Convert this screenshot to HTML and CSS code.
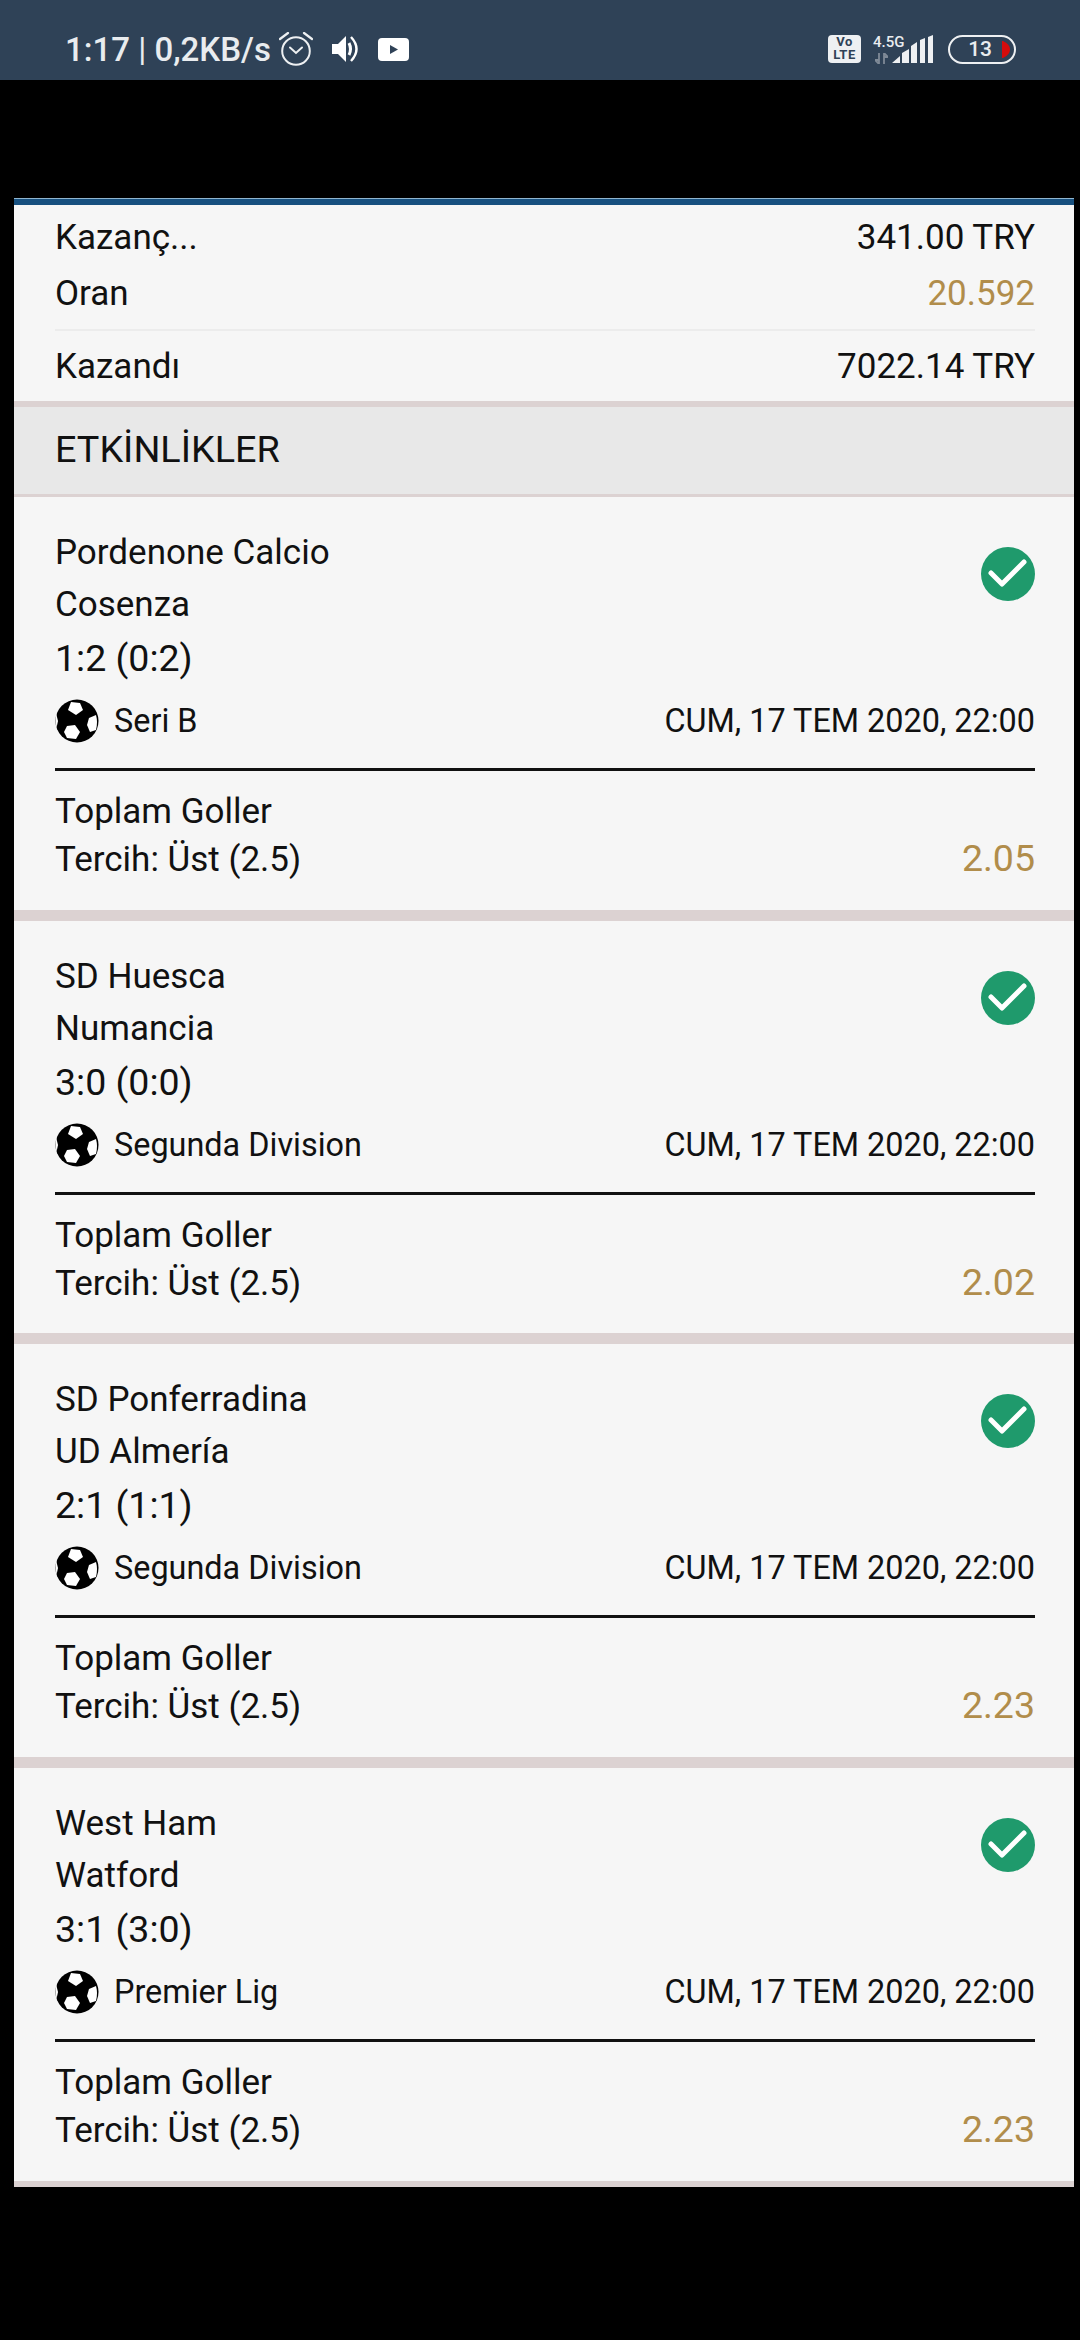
FILE: index.html
```html
<!doctype html>
<html lang="en">
  <head>
    <meta charset="UTF-8" />
    <meta name="viewport" content="width=device-width, initial-scale=1.0" />
    <title>Kupon</title>
    <link rel="stylesheet" href="styles.css">
  </head>
  <body>
    <svg class="defs" width="0" height="0">
      <symbol id="ball" viewBox="0 0 44 44">
        <circle cx="22" cy="22" r="21.5" fill="#000"/>
        <path d="M1 14Q0 22 1.5 29L3 22Z" fill="#fff"/>
        <path d="M16 3L25 4L28 11L21 16L13 11Z" fill="#fff"/>
        <path d="M34 19L41 16Q43 23 41 31L35 33L32 26Z" fill="#fff"/>
        <path d="M12 27L20 26L25 33L21 40L12 39L9 33Z" fill="#fff"/>
      </symbol>
      <symbol id="check" viewBox="0 0 54 54">
        <circle cx="27" cy="27" r="27" fill="#1f9a6c"/>
        <path d="M10 26L21 37L43 15" fill="none" stroke="#fff" stroke-width="5" stroke-linecap="round" stroke-linejoin="round"/>
      </symbol>
    </svg>

    <div class="status-bar">
      <div class="status-left">
        <span class="status-time">1:17 <span class="pipe">|</span> 0,2KB/s</span>
        <svg class="ic-alarm" width="34" height="34" viewBox="0 0 34 34">
          <circle cx="17" cy="19" r="13.8" fill="none" stroke="#eef0f2" stroke-width="2"/>
          <path d="M11 15.500L17 21L23 15.500" fill="none" stroke="#eef0f2" stroke-width="2" stroke-linecap="round"/>
          <path d="M1 7L9 1M33 7L25 1" stroke="#eef0f2" stroke-width="2.2" stroke-linecap="round"/>
        </svg>
        <svg class="ic-sound" width="26" height="26" viewBox="0 0 26 26">
          <path d="M0 8H6L14 0V26L6 18H0Z" fill="#fff"/>
          <path d="M17 7Q20 13 17 19" fill="none" stroke="#fff" stroke-width="3"/>
          <path d="M19 1Q30 13 19 25" fill="none" stroke="#fff" stroke-width="2.4"/>
        </svg>
        <svg class="ic-yt" width="31" height="23" viewBox="0 0 31 23">
          <rect width="31" height="23" rx="4" fill="#fff"/>
          <path d="M12 7L20 11.500L12 16Z" fill="#2f4257"/>
        </svg>
      </div>
      <div class="status-right">
        <div class="volte">Vo<br>LTE</div>
        <div class="net">
          <span class="net-label">4.5G</span>
          <svg width="13" height="11" viewBox="0 0 13 11">
            <path d="M4 0V11M4 11L0 7H4M9 11V0M9 0L13 4H9" stroke="#7f8a97" stroke-width="1.800" fill="none"/>
          </svg>
        </div>
        <svg class="bars" width="41" height="28" viewBox="0 0 41 28">
          <path d="M0 28L8 21V28Z M10 28V18L17 14V28Z M19 28V11L25 7V28Z M28 28V5L33 3V28Z M36 28V2L41 0V28Z" fill="#eef0f2"/>
        </svg>
        <div class="battery">
          <span>13</span>
          <svg class="battery-low" width="8" height="17" viewBox="0 0 8 17"><path d="M0 0H1Q8 3 8 8.500Q8 14 1 17H0Z" fill="#d40c0c"/></svg>
        </div>
      </div>
    </div>

    <div class="blackout"></div>

    <div class="panel">
      <div class="summary">
        <div class="row row-stake"><span>Kazanç...</span><span>341.00 TRY</span></div>
        <div class="row row-odds"><span>Oran</span><span class="gold">20.592</span></div>
        <div class="row row-won"><span>Kazandı</span><span>7022.14 TRY</span></div>
      </div>
      <div class="section-title">ETKİNLİKLER</div>

      <div class="event">
        <div class="event-top">
          <div class="teams">
            <div class="team">Pordenone Calcio</div>
            <div class="team">Cosenza</div>
            <div class="score">1:2 (0:2)</div>
          </div>
          <svg class="check" width="54" height="54"><use href="#check"/></svg>
        </div>
        <div class="league">
          <svg class="ball" width="44" height="44"><use href="#ball"/></svg>
          <span class="league-name">Seri B</span>
          <span class="date">CUM, 17 TEM 2020, 22:00</span>
        </div>
        <div class="market">
          <div>
            <div class="market-name">Toplam Goller</div>
            <div class="market-pick">Tercih: Üst (2.5)</div>
          </div>
          <span class="price">2.05</span>
        </div>
      </div>

      <div class="event">
        <div class="event-top">
          <div class="teams">
            <div class="team">SD Huesca</div>
            <div class="team">Numancia</div>
            <div class="score">3:0 (0:0)</div>
          </div>
          <svg class="check" width="54" height="54"><use href="#check"/></svg>
        </div>
        <div class="league">
          <svg class="ball" width="44" height="44"><use href="#ball"/></svg>
          <span class="league-name">Segunda Division</span>
          <span class="date">CUM, 17 TEM 2020, 22:00</span>
        </div>
        <div class="market">
          <div>
            <div class="market-name">Toplam Goller</div>
            <div class="market-pick">Tercih: Üst (2.5)</div>
          </div>
          <span class="price">2.02</span>
        </div>
      </div>

      <div class="event">
        <div class="event-top">
          <div class="teams">
            <div class="team">SD Ponferradina</div>
            <div class="team">UD Almería</div>
            <div class="score">2:1 (1:1)</div>
          </div>
          <svg class="check" width="54" height="54"><use href="#check"/></svg>
        </div>
        <div class="league">
          <svg class="ball" width="44" height="44"><use href="#ball"/></svg>
          <span class="league-name">Segunda Division</span>
          <span class="date">CUM, 17 TEM 2020, 22:00</span>
        </div>
        <div class="market">
          <div>
            <div class="market-name">Toplam Goller</div>
            <div class="market-pick">Tercih: Üst (2.5)</div>
          </div>
          <span class="price">2.23</span>
        </div>
      </div>

      <div class="event">
        <div class="event-top">
          <div class="teams">
            <div class="team">West Ham</div>
            <div class="team">Watford</div>
            <div class="score">3:1 (3:0)</div>
          </div>
          <svg class="check" width="54" height="54"><use href="#check"/></svg>
        </div>
        <div class="league">
          <svg class="ball" width="44" height="44"><use href="#ball"/></svg>
          <span class="league-name">Premier Lig</span>
          <span class="date">CUM, 17 TEM 2020, 22:00</span>
        </div>
        <div class="market">
          <div>
            <div class="market-name">Toplam Goller</div>
            <div class="market-pick">Tercih: Üst (2.5)</div>
          </div>
          <span class="price">2.23</span>
        </div>
      </div>
    </div>
  </body>
</html>
```

FILE: styles.css
```css
html {
  background-color: #000;
}
body {
  margin: 0;
  width: 1080px;
  height: 2340px;
  overflow: hidden;
  background-color: #000;
  font-family: Roboto, Arial, sans-serif;
  color: #111;
}
.defs {
  display: block;
  height: 0;
}
.status-bar {
  height: 80px;
  background-color: #2f4257;
  display: flex;
  justify-content: space-between;
  align-items: center;
  padding: 18px 64px 0 65px;
  box-sizing: border-box;
  color: #e9ecef;
}
.status-left,
.status-right {
  display: flex;
  align-items: center;
}
.status-time {
  font-size: 33px;
  font-weight: 500;
}
.pipe {
  font-weight: 400;
}
.ic-alarm {
  margin-left: 8px;
}
.ic-sound {
  margin-left: 19px;
}
.ic-yt {
  margin-left: 20px;
}
.volte {
  width: 33px;
  height: 28px;
  background-color: #eef0f2;
  border-radius: 4px;
  color: #2f4257;
  font-size: 13px;
  font-weight: 700;
  line-height: 13px;
  text-align: center;
  letter-spacing: 0.5px;
}
.net {
  width: 36px;
  margin-left: 12px;
  display: flex;
  flex-direction: column;
  align-items: flex-start;
  gap: 4px;
}
.net-label {
  font-size: 15px;
  font-weight: 500;
  line-height: 14px;
  white-space: nowrap;
}
.net svg {
  margin-left: 2px;
}
.bars {
  margin-left: -17px;
}
.battery {
  width: 68px;
  height: 29px;
  margin-left: 15px;
  box-sizing: border-box;
  border: 2.5px solid #eef0f2;
  border-radius: 15px;
  display: flex;
  align-items: center;
  justify-content: flex-end;
  padding-right: 4px;
  font-size: 21px;
  font-weight: 500;
}
.battery-low {
  margin-left: 10px;
}
.blackout {
  height: 118px;
}
.panel {
  width: 1060px;
  height: 1988px;
  overflow: hidden;
  margin-left: 14px;
  background-color: #f6f6f6;
  border-top: 1px solid #8fb5d0;
}
.summary {
  border-top: 6px solid #17507f;
  padding: 0 39px 0 41px;
}
.row {
  display: flex;
  justify-content: space-between;
  font-size: 35px;
  line-height: 56px;
}
.row-stake {
  padding-top: 5px;
}
.row-odds {
  padding-bottom: 7px;
  border-bottom: 2px solid #ececec;
}
.row-won {
  padding-top: 8px;
  padding-bottom: 6px;
}
.gold {
  color: #b18d4b;
}
.section-title {
  height: 87px;
  background-color: #e8e8e8;
  border-top: 6px solid #dcd2d2;
  border-bottom: 3px solid #dcd2d2;
  padding-left: 41px;
  font-size: 37.800px;
  line-height: 84px;
}
.event {
  padding: 0 39px 0 41px;
  border-bottom: 11px solid #dcd2d2;
}
.event-top {
  display: flex;
  justify-content: space-between;
  align-items: flex-start;
  padding-top: 30px;
}
.check {
  margin-top: 20px;
}
.team {
  font-size: 35px;
  line-height: 52px;
}
.score {
  font-size: 37.500px;
  line-height: 54px;
}
.league {
  display: flex;
  align-items: center;
  height: 56px;
  margin-top: 8px;
  padding-bottom: 19px;
  border-bottom: 3px solid #111;
  font-size: 32.400px;
}
.league-name {
  margin-left: 15px;
}
.date {
  margin-left: auto;
}
.market {
  display: flex;
  justify-content: space-between;
  align-items: flex-end;
  padding-top: 17px;
  padding-bottom: 25.670px;
}
.market-name,
.market-pick {
  font-size: 35px;
  line-height: 48px;
}
.price {
  font-size: 37.500px;
  line-height: 48px;
  margin-bottom: 2px;
  color: #b18d4b;
}
```
